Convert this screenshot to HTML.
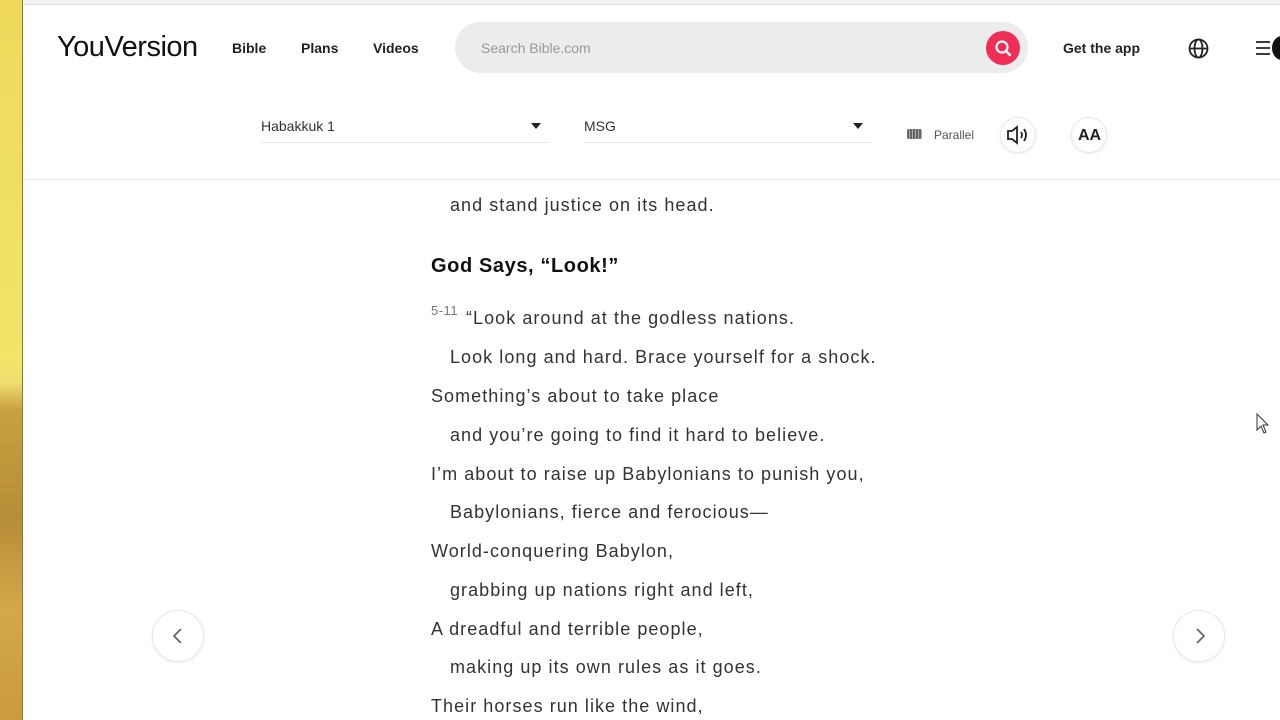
<!DOCTYPE html>
<html><head><meta charset="utf-8"><style>
*{margin:0;padding:0;box-sizing:border-box}
body{width:1280px;height:720px;overflow:hidden;background:#fff;font-family:"Liberation Sans",sans-serif;position:relative;color:#222}
.strip{position:absolute;left:0;top:0;width:23px;height:720px;background:linear-gradient(180deg,#efd85a 0%,#f2e56a 50%,#f0e070 53%,#c8a040 57%,#b88d38 72%,#d4a84a 85%,#c99a3e 100%);border-right:1px solid #8a7a30}
.topline{position:absolute;left:24px;top:0;right:0;height:5px;background:#f2f2f2;border-bottom:1px solid #ddd}
.abs{position:absolute;white-space:nowrap}
.nav{font-weight:bold;font-size:14px;color:#222}
.hdr{position:absolute;left:24px;right:0;top:179px;border-top:1px solid #e6e6e6}
.v{position:absolute;font-size:18px;color:#333;white-space:nowrap;letter-spacing:1.05px}
.circ{position:absolute;width:52px;height:52px;border-radius:50%;border:1px solid #e8e8e8;box-shadow:0 1px 3px rgba(0,0,0,.08);background:#fff}
</style></head><body>
<div class="strip"></div>
<div class="topline"></div>
<div class="abs" style="left:57px;top:31px;font-size:29px;color:#111;letter-spacing:-0.5px">YouVersion</div>
<div class="abs nav" style="left:232px;top:40px">Bible</div>
<div class="abs nav" style="left:301px;top:40px">Plans</div>
<div class="abs nav" style="left:373px;top:40px">Videos</div>
<div class="abs" style="left:455px;top:22px;width:573px;height:51px;border-radius:26px;background:#ececec"></div>
<div class="abs" style="left:481px;top:40px;font-size:14px;color:#999">Search Bible.com</div>
<div class="abs" style="left:986px;top:31px;width:34px;height:34px;border-radius:50%;background:#ef2e55"></div>
<svg class="abs" style="left:993px;top:38px" width="20" height="20" viewBox="0 0 20 20"><circle cx="9" cy="9" r="5.5" fill="none" stroke="#fff" stroke-width="2.2"/><path d="M13 13l4 4" stroke="#fff" stroke-width="2.4" stroke-linecap="round"/></svg>
<div class="abs nav" style="left:1063px;top:40px">Get the app</div>
<svg class="abs" style="left:1188px;top:38px" width="21" height="21" viewBox="0 0 21 21" fill="none" stroke="#222" stroke-width="1.8"><circle cx="10.5" cy="10.5" r="9"/><ellipse cx="10.5" cy="10.5" rx="4" ry="9"/><path d="M1.5 10.5h18"/></svg>
<svg class="abs" style="left:1255px;top:40px" width="16" height="16" viewBox="0 0 16 16" stroke="#222" stroke-width="1.8"><path d="M1 2h14M1 8h14M1 14h14"/></svg>
<div class="abs" style="left:1272px;top:36px;width:20px;height:24px;border-radius:50%;background:#111"></div>
<div class="abs" style="left:261px;top:118px;font-size:14px;color:#333">Habakkuk 1</div>
<div class="abs" style="left:531px;top:123px;border-left:5px solid transparent;border-right:5px solid transparent;border-top:6px solid #222"></div>
<div class="abs" style="left:261px;top:142px;width:288px;height:1px;background:#e6e6e6"></div>
<div class="abs" style="left:584px;top:118px;font-size:14px;color:#333">MSG</div>
<div class="abs" style="left:853px;top:123px;border-left:5px solid transparent;border-right:5px solid transparent;border-top:6px solid #222"></div>
<div class="abs" style="left:584px;top:142px;width:288px;height:1px;background:#e6e6e6"></div>
<div class="abs" style="left:907px;top:129px;width:15px;height:10px;border-radius:2px;background:#666;background-image:repeating-linear-gradient(90deg,#666 0 2px,#aaa 2px 3px)"></div>
<div class="abs" style="left:934px;top:128px;font-size:12px;color:#555">Parallel</div>
<div class="circ" style="left:1000px;top:117px;width:36px;height:36px"></div>
<svg class="abs" style="left:1006px;top:124px" width="24" height="22" viewBox="0 0 24 22" fill="none" stroke="#222" stroke-width="1.8"><path d="M2 7h4l5-4v16l-5-4H2z"/><path d="M15 8q2 3 0 6M18 5q4 6 0 12"/></svg>
<div class="circ" style="left:1071px;top:117px;width:36px;height:36px"></div>
<div class="abs" style="left:1078px;top:127px;font-size:16px;font-weight:bold;color:#222">AA</div>
<div class="hdr"></div>
<div class="v" style="left:450px;top:195px">and stand justice on its head.</div>
<div class="v" style="left:431px;top:255px;font-weight:bold;font-size:20px;color:#111;letter-spacing:0.6px">God Says, “Look!”</div>
<div class="v" style="left:431px;top:303px;font-size:13px;color:#777;letter-spacing:0.5px">5-11</div>
<div class="v" style="left:466px;top:308px">“Look around at the godless nations.</div>
<div class="v" style="left:450px;top:347px">Look long and hard. Brace yourself for a shock.</div>
<div class="v" style="left:431px;top:386px">Something’s about to take place</div>
<div class="v" style="left:450px;top:425px">and you’re going to find it hard to believe.</div>
<div class="v" style="left:431px;top:464px">I’m about to raise up Babylonians to punish you,</div>
<div class="v" style="left:450px;top:502px">Babylonians, fierce and ferocious—</div>
<div class="v" style="left:431px;top:541px">World-conquering Babylon,</div>
<div class="v" style="left:450px;top:580px">grabbing up nations right and left,</div>
<div class="v" style="left:431px;top:619px">A dreadful and terrible people,</div>
<div class="v" style="left:450px;top:657px">making up its own rules as it goes.</div>
<div class="v" style="left:431px;top:696px">Their horses run like the wind,</div>
<div class="circ" style="left:152px;top:610px"></div>
<svg class="abs" style="left:171px;top:628px" width="14" height="16" viewBox="0 0 14 16" fill="none" stroke="#666" stroke-width="1.8"><path d="M10 1L3 8l7 7"/></svg>
<div class="circ" style="left:1173px;top:610px"></div>
<svg class="abs" style="left:1193px;top:628px" width="14" height="16" viewBox="0 0 14 16" fill="none" stroke="#666" stroke-width="1.8"><path d="M4 1l7 7-7 7"/></svg>
<svg class="abs" style="left:1256px;top:413px" width="14" height="22" viewBox="0 0 14 22"><path d="M1 1v16l4-4 3 7 2-1-3-7h5z" fill="#fff" stroke="#333" stroke-width="1"/></svg>
</body></html>
